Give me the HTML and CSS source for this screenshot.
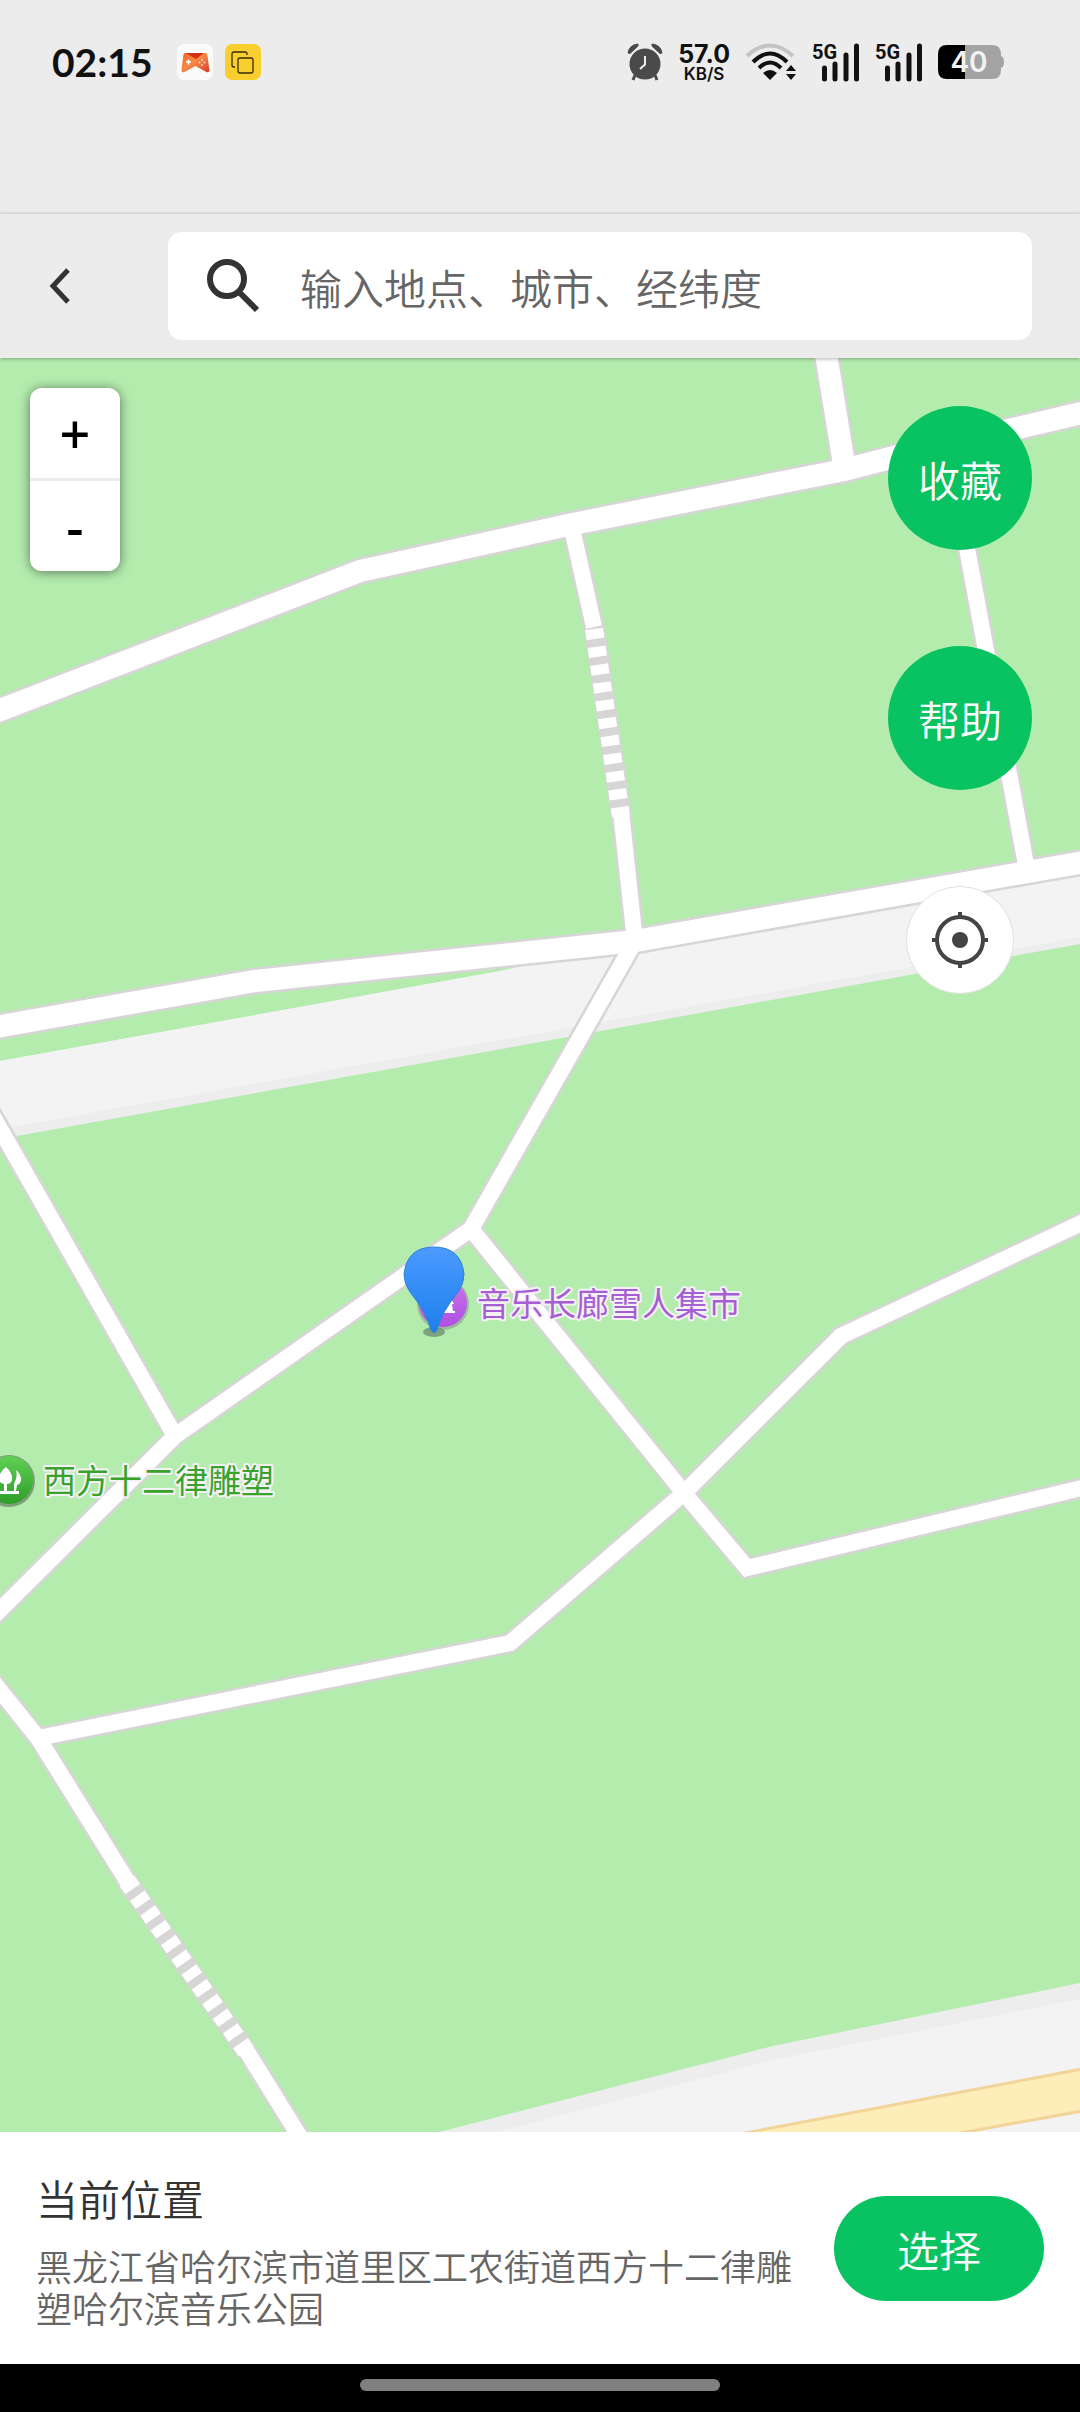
FILE: index.html
```
<!DOCTYPE html>
<html lang="zh-CN">
<head>
    <meta charset="UTF-8">
    <meta name="viewport" content="width=device-width, initial-scale=1.0">
    <title>选择位置</title>
    <link rel="stylesheet" href="styles.css">
</head>
<body>
    <div class="status-bar">
        <div class="status-left">
            <span class="clock">02:15</span>
            <svg class="app-icon" viewBox="0 0 36 36">
                <defs>
                    <linearGradient id="pad" x1="0" y1="0" x2="1" y2="1">
                        <stop offset="0" stop-color="#f2641f"/>
                        <stop offset="0.45" stop-color="#f58a45"/>
                        <stop offset="1" stop-color="#dc3b2c"/>
                    </linearGradient>
                </defs>
                <rect width="36" height="36" rx="7" fill="#fafafa"/>
                <path d="M8 9h20q2 0 2.400 2l2 15q0 3-3 2l-11-6-11 6q-3 1-3-2l2-15q.4-2 1.600-2z" fill="url(#pad)"/>
                <path d="M9 9h18l-8 6z" fill="#d42f14"/>
                <path d="M9 18h5M11.500 15.500v5" stroke="#fff" stroke-width="1.500"/>
                <g fill="#fbd5c8"><circle cx="25" cy="16" r="1"/><circle cx="25" cy="21" r="1"/><circle cx="22.500" cy="18.500" r="1"/><circle cx="27.500" cy="18.500" r="1"/></g>
            </svg>
            <svg class="app-icon" viewBox="0 0 36 36">
                <rect width="36" height="36" rx="7" fill="#f9cf2f"/>
                <path d="M10 23h-1q-2 0-2-2V10q0-2 2-2h11q2 0 2 2v1" fill="none" stroke="#3a2b08" stroke-width="1.300"/>
                <rect x="13" y="14" width="15" height="15" rx="2" fill="none" stroke="#3a2b08" stroke-width="1.300"/>
            </svg>
        </div>
        <div class="status-right">
            <svg class="alarm" viewBox="0 0 36 38">
                <g fill="#4a4a4a">
                    <circle cx="18" cy="21" r="15.500"/>
                    <path d="M1 10Q2 2 11 1L11 3 3 10.500zM35 10Q34 2 25 1L25 3 33 10.500z" stroke="#4a4a4a"/>
                    <path d="M8 32l-2 5M28 32l2 5" stroke="#4a4a4a" stroke-width="3"/>
                </g>
                <path d="M18 13v8.500l-5 4.500" fill="none" stroke="#eee" stroke-width="2"/>
            </svg>
            <div class="speed"><b>57.0</b><span>KB/S</span></div>
            <svg class="wifi" viewBox="0 0 52 38">
                <g fill="none" stroke="#111" stroke-width="4">
                    <path d="M2 13Q25-8 48 13" stroke="#c4c4c4"/>
                    <path d="M8 19Q25 2 42 19"/>
                    <path d="M14 25Q25 14 36 25"/>
                </g>
                <path d="M18 30Q25 24 32 30L25 37z" fill="#111"/>
                <path d="M41 28l5-6 5 6zM41 31h10l-5 6z" fill="#111"/>
            </svg>
            <svg class="signal" viewBox="0 -6 48 50">
                <text x="0" y="16">5G</text>
                <path d="M12.500 25v11M23 21v15M34 12v24M44.500 3v33" stroke="#111" stroke-width="5" stroke-linecap="round"/>
            </svg>
            <svg class="signal" viewBox="0 -6 48 50">
                <text x="0" y="16">5G</text>
                <path d="M12.500 25v11M23 21v15M34 12v24M44.500 3v33" stroke="#111" stroke-width="5" stroke-linecap="round"/>
            </svg>
            <svg class="battery" viewBox="0 0 66 34">
                <path d="M27 0h27q9 0 9 9v2q3 1 3 6t-3 6v2q0 9-9 9H27z" fill="#a3a3a3"/>
                <path d="M27 0H9Q0 0 0 9v16q0 9 9 9h18z"/>
                <text x="31" y="27">40</text>
            </svg>
        </div>
    </div>

    <header class="topbar">
        <button class="back" aria-label="返回">
            <svg viewBox="0 0 24 38"><path d="M20 3L5 19l15 16" fill="none" stroke="#333" stroke-width="5"/></svg>
        </button>
        <label class="search">
            <svg viewBox="0 0 54 54"><circle cx="21" cy="20" r="17" fill="none" stroke="#333" stroke-width="6"/><path d="M34 34l17 17" stroke="#333" stroke-width="6"/></svg>
            <input type="text" placeholder="输入地点、城市、经纬度" aria-label="搜索">
        </label>
    </header>

    <main class="map">
        <svg class="map-canvas" viewBox="0 358 1080 1774" preserveAspectRatio="xMidYMid slice">
            <defs>
                <linearGradient id="pin" x1="0" y1="0" x2="0" y2="1">
                    <stop offset="0" stop-color="#4c9aff"/>
                    <stop offset="1" stop-color="#1c80ec"/>
                </linearGradient>
                <linearGradient id="park" x1="0" y1="0" x2="0" y2="1">
                    <stop offset="0" stop-color="#5fcf55"/>
                    <stop offset="1" stop-color="#2f9e2a"/>
                </linearGradient>
                <linearGradient id="poi" x1="0" y1="0" x2="0" y2="1">
                    <stop offset="0" stop-color="#c975ea"/>
                    <stop offset="1" stop-color="#b04fe0"/>
                </linearGradient>
                <g id="paths">
                    <path d="M571 524L594 627M621 812L635 941L471 1229L175 1436L-10 1620"/>
                    <path d="M943 420L1027 870"/>
                    <path d="M-10 1111L175 1436"/>
                    <path d="M471 1229L684 1493L747 1568L1090 1486"/>
                    <path d="M1090 1219L841 1336L684 1493L510 1643L38 1738"/>
                    <path d="M-10 1678L38 1738L129 1884M246 2050L303 2142"/>
                </g>
                <g id="roads">
                    <path d="M-10 714L360 571L573 524L844 470L894 457L1090 411"/>
                    <path d="M825 348L844 464"/>
                    <path d="M-10 1028L255 981L635 941L1090 861"/>
                </g>
            </defs>

            <rect y="358" width="1080" height="1774" fill="#b4ecae"/>

            <!-- 灰色地块 -->
            <path d="M0 1061L500 971L635 941L1080 865V944L540 1042L0 1139z" fill="#ededed"/>
            <path d="M0 1061L500 971L635 941L1080 865V937L540 1033L0 1129z" fill="#f3f3f3"/>
            <path d="M439 2132L773 2046L1080 1983V2132z" fill="#ededed"/>
            <path d="M497 2132L773 2060L1080 1999V2132z" fill="#f3f3f3"/>
            <path d="M740 2134L1082 2069V2111L955 2134z" fill="#fdedb8" stroke="#f2d398" stroke-width="3"/>

            <!-- 道路 -->
            <g fill="none" stroke="#d7d5d6">
                <use href="#paths" stroke-width="21"/>
                <use href="#roads" stroke-width="27"/>
                <path d="M594 626L621 814M127 1881L246 2051" stroke-width="21"/>
            </g>
            <g fill="none" stroke="#fff">
                <use href="#paths" stroke-width="16"/>
                <use href="#roads" stroke-width="22"/>
                <path d="M594 629L621 816" stroke-width="18" stroke-dasharray="10 8"/>
                <path d="M127 1881L246 2051" stroke-width="18" stroke-dasharray="10 8"/>
            </g>

            <circle cx="443" cy="1304" r="26" fill="#8a9c8c" opacity="0.6"/>
            <circle cx="443" cy="1303" r="24" fill="url(#poi)"/>
            <path d="M443 1313h12v-2h-2l-1-7h2l-5-9-6 9z" fill="#fff"/>
            <ellipse cx="434" cy="1332" rx="11" ry="5" fill="#6f9270" opacity="0.8"/>
            <path d="M431 1330Q427 1313 410 1292Q404 1284 404 1274Q407 1247 434 1247Q461 1247 464 1274Q464 1284 458 1292Q441 1313 437 1330Q434 1335 431 1330z" fill="url(#pin)" stroke="#2f80d8"/>

            <circle cx="9" cy="1481" r="26" fill="#7f9f7c"/>
            <circle cx="9" cy="1480" r="24" fill="url(#park)"/>
            <path d="M6 1467q7 6 6 13-1 4-5 4v7h12v3H0v-3h4v-7q-5-1-5-5 0-7 7-12zM16 1470q6 5 5 11-1 3-4 4l-1 6h-2v-7q4-7 2-14z" fill="#fff"/>

            <text class="poi-name poi-market" x="477" y="1316">音乐长廊雪人集市</text>
            <text class="poi-name poi-park" x="43" y="1493">西方十二律雕塑</text>
        </svg>

        <div class="zoom-control">
            <button aria-label="放大">+</button>
            <button aria-label="缩小">-</button>
        </div>
        <div class="map-actions">
            <button class="round">收藏</button>
            <button class="round">帮助</button>
            <button class="locate" aria-label="定位">
                <svg viewBox="0 0 56 56">
                    <circle cx="28" cy="28" r="23" fill="none" stroke="#444" stroke-width="4"/>
                    <circle cx="28" cy="28" r="8" fill="#444"/>
                    <path d="M28 0v6M28 50v6M0 28h6M50 28h6" stroke="#444" stroke-width="4"/>
                </svg>
            </button>
        </div>
    </main>

    <section class="location">
        <div class="location-info">
            <h2>当前位置</h2>
            <p>黑龙江省哈尔滨市道里区工农街道西方十二律雕塑哈尔滨音乐公园</p>
        </div>
        <button class="choose">选择</button>
    </section>

    <div class="nav-bar"><span></span></div>
</body>
</html>
```
FILE: styles.css
```
:root {
    --green: #09c261;
    --bar: #ececec;
    --text: #333333;
    --text-sub: #666666;
}
* {
    box-sizing: border-box;
}
body {
    margin: 0;
    min-height: 100vh;
    display: flex;
    flex-direction: column;
    font-family: "Noto Sans CJK SC", sans-serif;
    font-weight: 350;
    color: var(--text);
    background-color: var(--bar);
}
button {
    padding: 0;
    border: none;
    font: inherit;
    cursor: pointer;
}
svg {
    display: block;
}

/* 状态栏 */
.status-bar {
    height: 214px;
    padding: 35px 76px 0 52px;
    display: flex;
    justify-content: space-between;
    align-items: flex-start;
    border-bottom: 2px solid #e6e6e6;
    color: #111;
}
.status-left,
.status-right {
    height: 54px;
    display: flex;
    align-items: center;
}
.status-left {
    gap: 12px;
}
.status-right {
    gap: 15px;
}
.clock {
    margin-right: 12px;
    font-family: Lato, sans-serif;
    font-size: 39px;
    font-weight: 700;
}
.app-icon {
    width: 36px;
    height: 36px;
}
.alarm {
    width: 36px;
    height: 38px;
}
.speed {
    display: flex;
    flex-direction: column;
    align-items: center;
    font-family: Inter, sans-serif;
    font-weight: 600;
    font-size: 17px;
    line-height: 16px;
}
.speed b {
    font-size: 25px;
    font-weight: 700;
    line-height: 24px;
}
.wifi {
    width: 52px;
    height: 38px;
}
.signal {
    width: 48px;
    height: 50px;
}
.signal text {
    font: 700 20px Roboto, sans-serif;
    fill: #111;
}
.battery {
    width: 66px;
    height: 34px;
}
.battery text {
    font: 600 28px Inter, sans-serif;
    fill: #f2f2f2;
    text-anchor: middle;
}

/* 搜索栏 */
.topbar {
    position: relative;
    z-index: 1;
    padding: 18px 48px 18px 36px;
    display: flex;
    align-items: center;
    background-color: var(--bar);
    box-shadow: 0 1px 4px rgba(0, 0, 0, 0.3);
}
.back {
    width: 132px;
    padding: 24px 12px;
    background: none;
}
.back svg {
    width: 24px;
    height: 38px;
}
.search {
    flex: 1;
    height: 108px;
    padding: 0 36px 0 38px;
    display: flex;
    align-items: center;
    gap: 40px;
    background-color: #fff;
    border-radius: 14px;
}
.search svg {
    width: 54px;
    height: 54px;
}
.search input {
    flex: 1;
    min-width: 0;
    padding: 0;
    border: none;
    outline: none;
    background: none;
    font: inherit;
    font-size: 42px;
}
.search input::placeholder {
    color: var(--text-sub);
    opacity: 1;
}

/* 地图 */
.map {
    position: relative;
    flex: 1;
    overflow: hidden;
    background-color: #b4ecae;
}
.map-canvas {
    position: absolute;
    width: 100%;
    height: 100%;
}
.poi-name {
    font-size: 33px;
    font-weight: 400;
    paint-order: stroke;
    stroke: #f6f0f8;
    stroke-width: 4px;
    stroke-linejoin: round;
}
.poi-market {
    fill: #a65fd2;
}
.poi-park {
    fill: #38a32a;
}
.zoom-control {
    position: absolute;
    top: 30px;
    left: 30px;
    width: 90px;
    border-radius: 12px;
    overflow: hidden;
    box-shadow: 0 1px 12px rgba(0, 0, 0, 0.5);
}
.zoom-control button {
    display: block;
    width: 100%;
    height: 90px;
    background-color: #fff;
    color: #000;
    font-family: "Noto Sans", sans-serif;
    font-size: 54px;
    font-weight: 500;
    line-height: 90px;
}
.zoom-control button + button {
    border-top: 3px solid #ebebeb;
    height: 93px;
}
.map-actions {
    position: absolute;
    top: 48px;
    right: 48px;
    display: flex;
    flex-direction: column;
    align-items: center;
    gap: 96px;
}
.round {
    width: 144px;
    height: 144px;
    border-radius: 50%;
    background-color: var(--green);
    color: #fff;
    font-size: 42px;
}
.locate {
    width: 108px;
    height: 108px;
    display: flex;
    align-items: center;
    justify-content: center;
    border: 1px solid #e0e0e0;
    border-radius: 50%;
    background-color: #fff;
}
.locate svg {
    width: 56px;
    height: 56px;
}

/* 底部位置信息 */
.location {
    min-height: 232px;
    padding: 36px;
    display: flex;
    align-items: center;
    gap: 36px;
    background-color: #fff;
}
.location-info {
    flex: 1;
}
.location h2 {
    margin: 0 0 16px;
    font-size: 42px;
    font-weight: 350;
    line-height: 60px;
}
.location p {
    margin: 0;
    color: var(--text-sub);
    font-size: 36px;
    line-height: 42px;
}
.choose {
    width: 210px;
    height: 105px;
    border-radius: 53px;
    background-color: var(--green);
    color: #fff;
    font-size: 42px;
}
.nav-bar {
    height: 48px;
    padding-top: 15px;
    background-color: #000;
}
.nav-bar span {
    display: block;
    width: 360px;
    height: 12px;
    margin: 0 auto;
    border-radius: 6px;
    background-color: #808080;
}
```
